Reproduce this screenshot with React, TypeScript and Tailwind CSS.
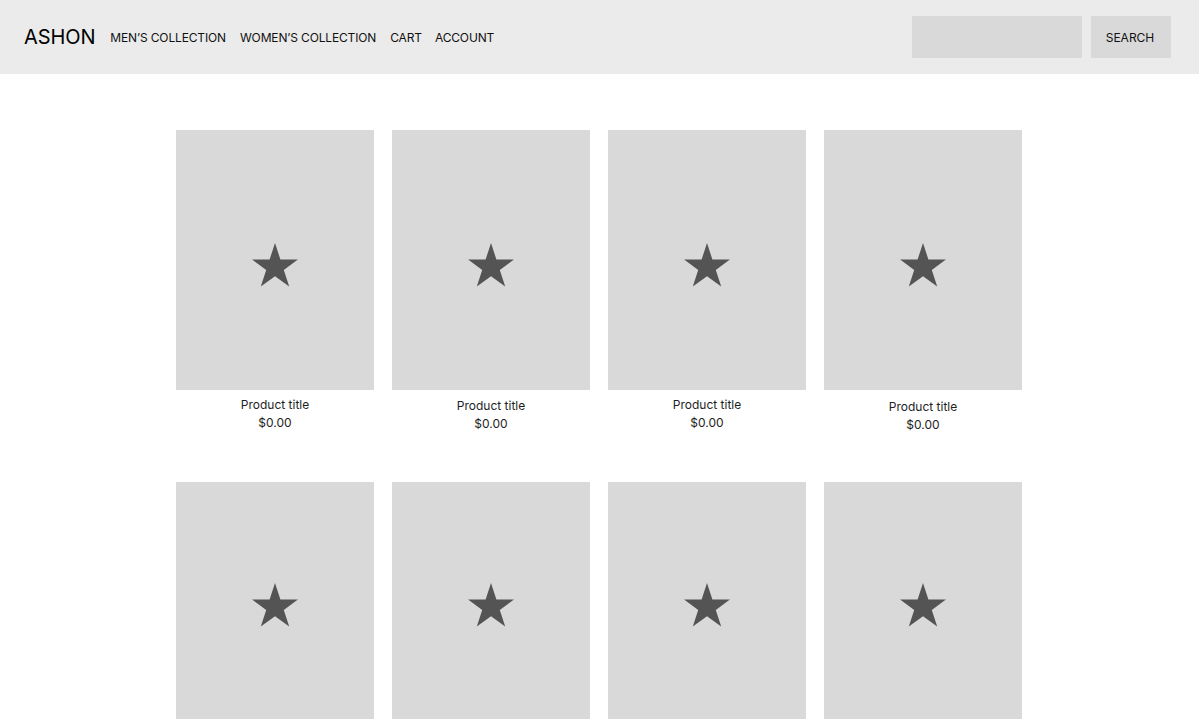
import React from 'react';

const Star = () => (
  <svg width="46" height="44" viewBox="0 0 46 44" className="block">
    <polygon
      points="23,0 28.4,16.6 45.9,16.6 31.8,26.9 37.2,43.6 23,33.3 8.8,43.6 14.2,26.9 0.1,16.6 17.6,16.6"
      fill="#545454"
    />
  </svg>
);

interface ProductCardProps {
  starTop: string;
  titleShift?: string;
}

function ProductCard({ starTop, titleShift = '' }: ProductCardProps) {
  return (
    <div className="flex flex-col items-center">
      <div className={`w-full h-[260px] bg-[#d9d9d9] flex justify-center ${starTop}`}>
        <Star />
      </div>
      <div className={`flex flex-col items-center text-[12px] leading-[18px] text-[#1e1e1e] pt-[6px] ${titleShift}`}>
        <span>Product title</span>
        <span>$0.00</span>
      </div>
    </div>
  );
}

export default function App() {
  const firstRowShifts = ['', 'mt-[1px]', '', 'mt-[2px]'];

  return (
    <div className="min-h-screen bg-white font-['Inter',sans-serif]">
      {/* Header */}
      <header className="h-[74px] bg-[#ebebeb] flex items-center justify-between pl-6 pr-7">
        <div className="flex items-center">
          <span className="text-[20px] tracking-[-0.1px] text-black mr-[15px]">ASHON</span>
          <nav className="flex items-center gap-[14px] text-[12px] tracking-[-0.15px] text-[#111] pt-[1px]">
            <a href="#">MEN’S COLLECTION</a>
            <a href="#">WOMEN’S COLLECTION</a>
            <a href="#">CART</a>
            <a href="#" className="-ml-px">ACCOUNT</a>
          </nav>
        </div>
        <div className="flex items-center gap-[9px]">
          <input type="text" className="w-[170px] h-[42px] bg-[#d9d9d9] outline-none px-3 text-sm" />
          <button className="w-[80px] h-[42px] bg-[#d9d9d9] text-[12px] text-[#111] pt-[1px] pr-[2px]">SEARCH</button>
        </div>
      </header>

      {/* Products */}
      <main className="flex justify-center pt-[56px] pr-px">
        <div className="grid grid-cols-4 gap-x-[18px] gap-y-[48px] w-[846px]">
          {firstRowShifts.map((s, i) => (
            <ProductCard key={`a${i}`} starTop="pt-[113px]" titleShift={s} />
          ))}
          {[0, 1, 2, 3].map((i) => (
            <ProductCard key={`b${i}`} starTop="pt-[101px]" />
          ))}
        </div>
      </main>
    </div>
  );
}
